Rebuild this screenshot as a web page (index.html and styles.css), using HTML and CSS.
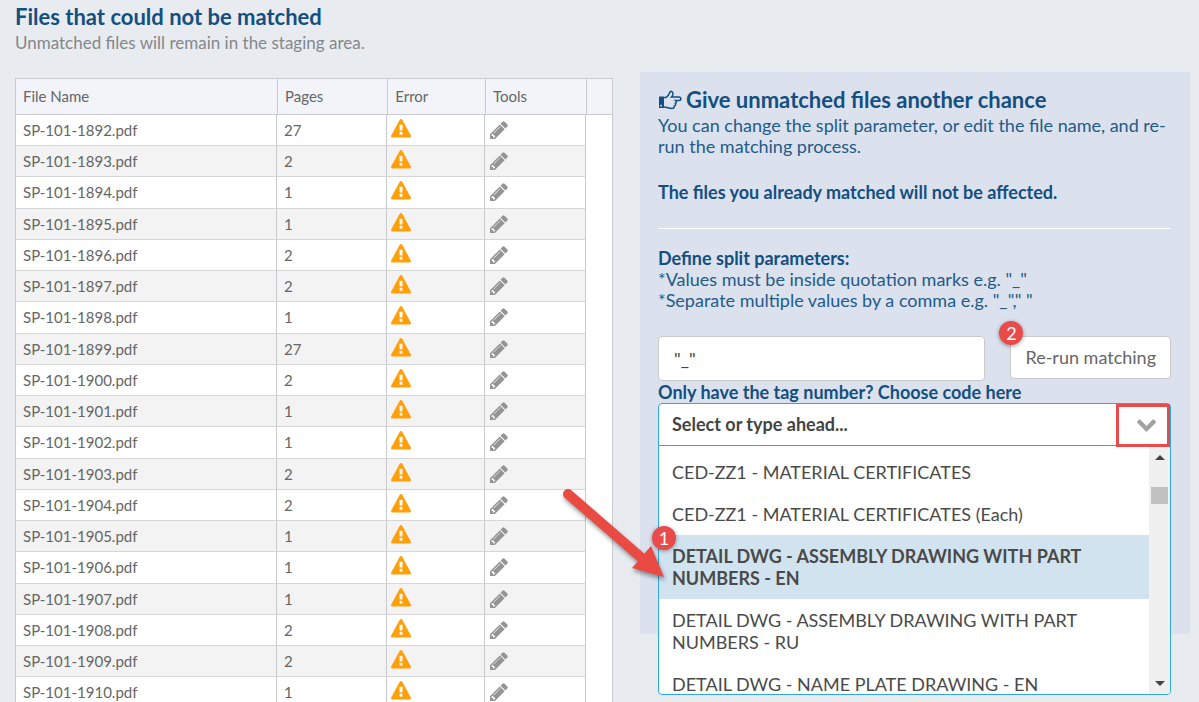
FILE: index.html
```html
<!DOCTYPE html>
<html lang="en">
<head>
<meta charset="utf-8">
<title>Unmatched files</title>
<link rel="stylesheet" href="styles.css">
</head>
<body>
<svg class="sprite" aria-hidden="true">
  <symbol id="warning" viewBox="0 0 1792 1792"><path d="M1024 1375v-190q0-14-9.500-23.500t-22.500-9.500h-192q-13 0-22.500 9.500t-9.500 23.500v190q0 14 9.500 23.500t22.500 9.500h192q13 0 22.500-9.500t9.500-23.500zm-2-374l18-459q0-12-10-19-13-11-24-11h-220q-11 0-24 11-10 7-10 21l17 457q0 10 10 16.500t24 6.500h185q14 0 23.500-6.500t10.500-16.500zm-14-934l768 1408q35 63-2 126-17 29-46.500 46t-63.500 17h-1536q-34 0-63.500-17t-46.500-46q-37-63-2-126l768-1408q17-31 47-49t65-18 65 18 47 49z"/></symbol>
  <symbol id="pencil" viewBox="128 128 1536 1536"><path d="M491 1536l91-91-235-235-91 91v107h128v128h107zm523-928q0-22-22-22-10 0-17 7l-542 542q-7 7-7 17 0 22 22 22 10 0 17-7l542-542q7-7 7-17zm-54-192l416 416-832 832h-416v-416zm683 96q0 53-37 90l-166 166-416-416 166-165q36-38 90-38 53 0 91 38l235 234q37 39 37 91z"/></symbol>
</svg>
<main class="page">
  <section class="unmatched">
    <h1 class="title">Files that could not be matched</h1>
    <p class="subtitle">Unmatched files will remain in the staging area.</p>
    <div class="table-frame">
      <table class="files">
        <colgroup><col class="col-name"><col class="col-pages"><col class="col-error"><col class="col-tools"><col></colgroup>
        <thead><tr><th>File Name</th><th>Pages</th><th>Error</th><th>Tools</th><th></th></tr></thead>
        <tbody id="rows"></tbody>
      </table>
    </div>
  </section>
  <section class="panel">
    <h2 class="title panel-title"><svg class="hand" viewBox="0 0 24 20" aria-hidden="true"><path class="hand-line" d="M6 7.500H8C10 6.500 11 4.500 11.700 2.500C12.500 0.500 15 1.200 15 4C15 5.500 14 6.500 13.500 7H21C23.500 7 23.500 10.500 21 10.500H17.500C18.700 11.500 18.500 13 17.300 13.500C17.800 15 17.300 16 16.300 16.200C16.300 18 15.500 18.500 14 18.500C11 18.500 9 17 6 17"/><path class="hand-cuff" fill-rule="evenodd" d="M1 6.500H6V18H1ZM2.200 14.800V16.500H3.800V14.800Z"/></svg>Give unmatched files another chance</h2>
    <p class="text">You can change the split parameter, or edit the file name, and re-run the matching process.</p>
    <p class="text strong notice">The files you already matched will not be affected.</p>
    <hr class="rule">
    <label class="text strong" for="split">Define split parameters:</label>
    <p class="text">*Values must be inside quotation marks e.g. "_"<br>*Separate multiple values by a comma e.g. "_"," "</p>
    <div class="split-row">
      <input class="split-input" id="split" type="text" value='"_"'>
      <div class="run-wrap"><button class="run" type="button">Re-run matching</button><span class="badge badge-two">2</span></div>
    </div>
    <label class="text strong code-label" for="code">Only have the tag number? Choose code here</label>
    <div class="combo">
      <div class="combo-box">
        <input class="combo-input" id="code" type="text" placeholder="Select or type ahead..." role="combobox" aria-expanded="true" aria-controls="codes">
        <button class="combo-toggle" type="button" aria-label="Show codes"><svg class="chevron" viewBox="90 533 1612 1035"><path d="M1683 808l-742 741q-19 19-45 19t-45-19l-742-741q-19-19-19-45.500t19-45.500l166-165q19-19 45-19t45 19l531 531 531-531q19-19 45-19t45 19l166 165q19 19 19 45.500t-19 45.500z"/></svg></button>
      </div>
      <div class="dropdown">
        <ul class="options" id="codes" role="listbox">
          <li class="option" role="option">CED-ZZ1 - MATERIAL CERTIFICATES</li>
          <li class="option" role="option">CED-ZZ1 - MATERIAL CERTIFICATES (Each)</li>
          <li class="option active" role="option" aria-selected="true">DETAIL DWG - ASSEMBLY DRAWING WITH PART NUMBERS - EN</li>
          <li class="option" role="option">DETAIL DWG - ASSEMBLY DRAWING WITH PART NUMBERS - RU</li>
          <li class="option" role="option">DETAIL DWG - NAME PLATE DRAWING - EN</li>
        </ul>
        <div class="scrollbar" aria-hidden="true"><i class="arrow-up"></i><i class="thumb"></i><i class="arrow-down"></i></div>
      </div>
      <svg class="pointer" viewBox="0 0 112 100" aria-hidden="true"><path d="M8 8L84 74" class="pointer-line"/><path class="pointer-head" d="M104 91L91 60L72 82Z"/></svg>
      <span class="badge badge-one">1</span>
    </div>
  </section>
</main>
<script src="rows.js"></script>
</body>
</html>
```
FILE: rows.js
```js
const pages = [27, 2, 1, 1, 2, 2, 1, 27, 2, 1, 1, 2, 2, 1, 1, 1, 2, 2, 1];
document.getElementById("rows").innerHTML = pages.map((count, i) => `
  <tr>
    <td>SP-101-${1892 + i}.pdf</td>
    <td>${count}</td>
    <td class="cell-icon"><svg class="icon warning" role="img" aria-label="Error"><use href="#warning"/></svg></td>
    <td class="cell-icon"><button class="edit" type="button" aria-label="Edit file name"><svg class="icon pencil"><use href="#pencil"/></svg></button></td>
    <td></td>
  </tr>`).join("");
```
FILE: styles.css
```css
* { box-sizing: border-box; }
body { margin: 0; background: #e8ecf1; color: #666; font-family: Lato, "Open Sans", sans-serif; font-size: 18px; line-height: 21px; }
h1, h2, p { margin: 0; }
button, input { font: inherit; color: inherit; }
.sprite { display: none; }
.page { display: grid; grid-template-columns: 598fr 550fr; gap: 27px; align-items: start; height: 100vh; overflow: hidden; padding: 0 9px 0 15px; }
.unmatched { display: flex; flex-direction: column; padding-top: 3px; min-height: 100vh; }
.title { font-size: 22px; line-height: 28px; font-weight: 700; color: #134f80; }
.subtitle { font-size: 17px; line-height: 24px; color: #84878b; }
.table-frame { flex: 1; margin-top: 23px; background: #fff; border: 1px solid #c8cacd; }
.files { width: 100%; table-layout: fixed; border-collapse: separate; border-spacing: 0; font-size: 15px; }
.col-name { width: 43.8%; }
.col-pages { width: 18.5%; }
.col-error { width: 16.4%; }
.col-tools { width: 17%; }
.files th { height: 36px; padding: 0 7px; text-align: left; font-weight: 400; background: #f2f4fa; border-bottom: 1px solid #c8cacd; }
.files th + th { border-left: 1px solid #c8cacd; }
.files td { height: 31px; padding: 0 7px; line-height: 30px; vertical-align: top; border-right: 1px solid #c8cacd; border-bottom: 1px solid #d6d6d6; }
.files tr:nth-child(4n+3) td { height: 32px; }
.files tr:nth-child(even) td { background: #f3f3f3; }
.files td:last-child, .files tr:nth-child(even) td:last-child { border: 0; background: #fff; }
.files .cell-icon { padding: 4px 4px 0; line-height: 20px; }
.icon { display: block; }
.warning { width: 20px; height: 20px; fill: #ff9f0a; }
.edit { display: block; padding: 2px 1px; border: 0; background: none; }
.pencil { width: 18px; height: 18px; fill: #949494; }
.panel { margin-top: 72px; padding: 14px 19px 188px 18px; background: #dce1ee; color: #225b8a; }
.panel-title { display: flex; align-items: center; gap: 4px; margin-bottom: 1px; }
.hand { width: 24px; height: 20px; }
.hand-line { fill: none; stroke: #134f80; stroke-width: 1.500; }
.hand-cuff { fill: #134f80; }
.text { display: block; }
.strong { font-weight: 700; color: #134f80; }
.notice { margin-top: 25px; }
.rule { height: 1px; margin: 25px 0 19px; border: 0; background: #fff; }
.split-row { display: flex; align-items: flex-start; gap: 25px; margin-top: 25px; }
.split-input { flex: 1; min-width: 0; height: 45px; padding: 0 15px; border: 1px solid #c9c9c9; border-radius: 4px; background: #fff; color: #444; }
.run-wrap { position: relative; }
.run { height: 43px; padding: 0 14px; border: 1px solid #c9c9c9; border-radius: 4px; background: #fff; color: #666; }
.badge { position: absolute; width: 24px; height: 24px; border-radius: 50%; background: #e94b4a; color: #fff; line-height: 24px; text-align: center; box-shadow: 0 1px 4px #0006; }
.badge-two { left: -11px; top: -15px; }
.badge-one { left: -6px; top: 123px; }
.code-label { line-height: 22px; }
.combo { position: relative; color: #4a4a4a; }
.combo-box { position: relative; z-index: 1; display: flex; height: 43px; border: 1px solid #2ea9df; border-radius: 4px 4px 0 0; background: #fff; }
.combo-input { flex: 1; min-width: 0; padding: 0 13px; border: 0; background: none; }
.combo-input::placeholder { color: #444; opacity: 1; font-weight: 700; }
.combo-toggle { width: 54px; height: 43px; padding: 0 0 0 7px; border: 3px solid #e94b4a; background: #fff; }
.chevron { display: block; width: 19px; height: 13px; margin: auto; fill: #a2a2a2; }
.dropdown { position: absolute; top: 42px; left: 0; right: 0; display: flex; height: 250px; overflow: hidden; border: 1px solid #2ea9df; border-radius: 0 0 4px 4px; background: #fff; }
.options { flex: 1; margin: 0; padding: 5px 0 0; list-style: none; }
.option { padding: 10px 13px; line-height: 22px; }
.active { background: #d2e3f0; font-weight: 700; }
.scrollbar { display: flex; flex-direction: column; align-items: center; width: 21px; padding: 9px 0 8px; background: #f0f0f0; }
.arrow-up, .arrow-down { border: 5px solid transparent; border-top: 0; border-bottom-color: #444; }
.arrow-down { margin-top: auto; border-top: 5px solid #444; border-bottom: 0; }
.thumb { width: 17px; height: 17px; margin-top: 27px; background: #c1c1c1; }
.pointer { position: absolute; left: -98px; top: 83px; width: 112px; height: 100px; filter: drop-shadow(1px 3px 2px #0006); }
.pointer-line { fill: none; stroke: #e94b43; stroke-width: 10; stroke-linecap: round; }
.pointer-head { fill: #e94b43; }
```
